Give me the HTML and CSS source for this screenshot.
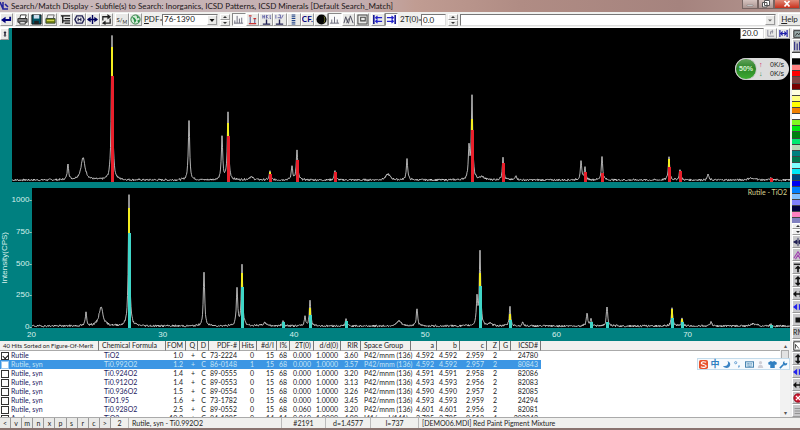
FILE: index.html
```html
<!DOCTYPE html>
<html lang="en">

<head>
    <meta charset="UTF-8">
    <meta name="viewport" content="width=device-width, initial-scale=1.0">
    <title>Search/Match Display</title>
    <link rel="stylesheet" href="styles.css">
</head>

<body>
    <header class="titlebar">
        <svg class="app-icon" viewBox="0 0 9 10"><path d="M0 1l3 7M3 1v7h5M5 3l3 3" stroke="#22229c" stroke-width="1.5" fill="none"/></svg>
        <h1>Search/Match Display - Subfile(s) to Search: Inorganics, ICSD Patterns, ICSD Minerals [Default Search_Match]</h1>
        <div class="window-buttons">
            <button aria-label="Minimize"><svg viewBox="0 0 8 8"><path d="M1 5h6v1H1z" fill="#fff" stroke="#777" stroke-width=".5"/></svg></button>
            <button aria-label="Restore"><svg viewBox="0 0 8 8"><path d="M2.500.5h5v5h-5zM.5 2.500h4.500v4.500H.5z" fill="#fff" stroke="#555"/></svg></button>
            <button class="close" aria-label="Close"><svg viewBox="0 0 8 8"><path d="M1.500 1l5 5.500M6.500 1l-5 5.500" stroke="#fff" stroke-width="1.800"/></svg></button>
        </div>
    </header>

    <div class="toolbar">
        <div class="group one">
            <button aria-label="Return"><svg viewBox="0 0 12 12"><path d="M10 3v3.500H3" stroke="#00007c" stroke-width="2" fill="none"/><path d="M0 6.500L5 3v7z" fill="#00007c"/></svg></button>
        </div>
        <div class="group three">
            <button aria-label="Print"><svg viewBox="0 0 12 12"><path d="M3 5l1-4h6L9 5z" fill="#fff" stroke="#333"/><path d="M1 5h10v4H1z" fill="#888" stroke="#222"/><path d="M3 8h6v3H3z" fill="#ddd" stroke="#333"/></svg></button>
            <button aria-label="Save"><svg viewBox="0 0 12 12"><path d="M1 1h10v10H1z" fill="#056" stroke="#111"/><path d="M3 1h6v4H3z" fill="#cde"/><path d="M3.500 7.500h5V11h-5z" fill="#222"/></svg></button>
            <button aria-label="Open"><svg viewBox="0 0 12 12"><path d="M2 5l1-4h7l-1 4z" fill="#eee" stroke="#666"/><path d="M1 5h10v5H1z" fill="#7a8a10" stroke="#343"/><path d="M2 7h8" stroke="#e5e560"/></svg></button>
        </div>
        <div class="group four">
            <button aria-label="List"><svg viewBox="0 0 12 12"><path d="M1 2h10M3 2v8M5 5h6M3 7.500h8M5 10h6" stroke="#111" stroke-width="1.400" fill="none"/></svg></button>
            <button aria-label="Element filter"><svg viewBox="0 0 12 12"><path d="M3 2h6l2 4-2 4H3L1 6z" fill="none" stroke="#225" stroke-width="1.500"/><path d="M4.500 4v4M7.500 4v4M4 6h4" stroke="#225" stroke-width="1.200"/></svg></button>
            <button aria-label="Align"><svg viewBox="0 0 12 12"><path d="M6 1v10M1 6h10" stroke="#00005c" stroke-width="1.500"/><path d="M0 6l4-3v6zM12 6L8 3v6z" fill="#00005c"/></svg></button>
            <button aria-label="Refresh"><svg viewBox="0 0 12 12"><path d="M2 7V3h6M10 5v5H4" fill="none" stroke="#222" stroke-width="1.400"/><path d="M7 0l4 3-4 3zM5 7l-4 3 4 2z" fill="#222"/></svg></button>
        </div>
        <div class="group two">
            <button class="sm" aria-label="Search match">S/<sub>M</sub></button>
            <button aria-label="Globe"><svg viewBox="0 0 12 12"><circle cx="6" cy="6" r="5" fill="#d5ebd8" stroke="#28783c"/><path d="M2 3l3 1 2 3-2 3-1-4zM7 1l3 3-2 1zM8 7l3-1-2 4z" fill="#269044"/></svg></button>
        </div>
        <label class="pdf-label" for="pdf"><u>P</u>DF=</label>
        <div class="combo pdf">
            <input type="text" id="pdf" value="76-1390">
            <button aria-label="PDF list"><svg viewBox="0 0 8 8"><path d="M1.500 3h5L4 6z" fill="#111"/></svg></button>
        </div>
        <div class="spin"><button aria-label="Next card"></button><button aria-label="Previous card"></button></div>
        <div class="group ten">
            <button class="on" aria-label="Pattern"><svg viewBox="0 0 12 12"><path d="M1 10h10M2 10V7M4.500 10V2M7 10V5M9.500 10V4" stroke="#667" fill="none"/></svg></button>
            <button aria-label="Markers"><svg viewBox="0 0 12 12"><path d="M3.500 11V3M8.500 11V5" stroke="#448"/><path d="M2 2h3M7 5h3M2 10.500h8" stroke="#c33" stroke-width="1.300"/></svg></button>
            <button aria-label="HKL labels"><svg viewBox="0 0 12 12"><path d="M2 1v4M4 1v4M2 3h2M6 1v4M8 1L6 3l2 2M10 1v4h1" stroke="#449" stroke-width=".8" fill="none"/><path d="M6 6v5M2 11h8" stroke="#225" stroke-width="1.500"/></svg></button>
            <button aria-label="Intensity labels"><svg viewBox="0 0 12 12"><path d="M2 1v4M5 1h2v4M10 1L8 5M4 4h3" stroke="#449" stroke-width=".8" fill="none"/><path d="M6 6v5M2 11h8" stroke="#225" stroke-width="1.500"/></svg></button>
            <button aria-label="Stack"><svg viewBox="0 0 12 12"><path d="M4 1h4M4 3h4M4 5h4M4 7h4M4 9h4M4 11h4" stroke="#248" stroke-width="1.100"/></svg></button>
            <button class="cf" aria-label="Chemical formula">CF.</button>
            <button aria-label="Contrast"><svg viewBox="0 0 12 12"><circle cx="6" cy="6" r="5.500" fill="#050505"/><path d="M8 2a5 5 0 010 8c2-3 2-5 0-8z" fill="#d4df45"/></svg></button>
            <button class="on" aria-label="Low peaks"><svg viewBox="0 0 12 12"><path d="M1 10h10M3 10V6M6 10V3M9 10V6" stroke="#667" fill="none"/></svg></button>
            <button aria-label="Overlay"><svg viewBox="0 0 12 12"><path d="M1 10l2-7 2 6 1 1 2-8 3 8M4 10l2-5" stroke="#445" fill="none"/></svg></button>
            <button aria-label="Window"><svg viewBox="0 0 12 12"><path d="M1 1h10v10H1zM4 3.500h5v4H4z" stroke="#444" fill="none" stroke-width="1.100"/></svg></button>
        </div>
        <div class="group two">
            <button aria-label="Shift left"><svg viewBox="0 0 12 12"><path d="M2 1v10" stroke="#00008c" stroke-width="1.600"/><path d="M4 4h7M4 8h7M6 2L4 4l2 2M6 6L4 8l2 2" stroke="#22c" fill="none" stroke-width="1.300"/></svg></button>
            <button class="on" aria-label="Shift right"><svg viewBox="0 0 12 12"><path d="M10 1v10" stroke="#00008c" stroke-width="1.600"/><path d="M1 4h7M1 8h7M6 2l2 2-2 2M6 6l2 2-2 2" stroke="#22c" fill="none" stroke-width="1.300"/></svg></button>
        </div>
        <label class="offset-label" for="offset">2T(0)=</label>
        <input type="text" id="offset" class="offset" value="0.0">
        <div class="spin"><button aria-label="Increase offset"></button><button aria-label="Decrease offset"></button></div>
        <div class="combo long">
            <input type="text" aria-label="Hit description">
            <button aria-label="Hit list"><svg viewBox="0 0 8 8"><path d="M2 3.500h4L4 5.500z" fill="#666"/></svg></button>
        </div>
        <button class="help"><span><u>H</u>elp</span></button>
    </div>

    <div class="workspace">
        <main class="content">
            <section class="plots">
                <div class="plot-row upper">
                    <div class="gutter"><button class="tiny" aria-label="Scale plot"><svg viewBox="0 0 8 8"><path d="M4 0l2 2.500H2zM4 8l2-2.500H2zM3 2h2v4H3z" fill="#223"/></svg></button></div>
                    <svg class="plot" id="plot-top" viewBox="12 28 778 154" preserveAspectRatio="none"></svg>
                </div>
                <div class="plot-row lower">
                    <div class="y-axis">
                        <div class="y-title">Intensity(CPS)</div>
                        <div class="y-labels"><span>1000-</span><span>750-</span><span>500-</span><span>250-</span><span>0-</span></div>
                    </div>
                    <svg class="plot" id="plot-bottom" viewBox="32 188 758 140" preserveAspectRatio="none"></svg>
                    <div class="phase">Rutile - TiO2</div>
                </div>
                <div class="x-axis"><span>20</span><span>30</span><span>40</span><span>50</span><span>60</span><span>70</span></div>

                <div class="range">
                    <input type="text" aria-label="Range" value="20.0">
                    <button aria-label="Axis"><svg viewBox="0 0 10 10"><path d="M2 1v7h7M5 6V3h3M7 1v4" stroke="#889" fill="none"/></svg></button>
                    <button aria-label="Full range"><svg viewBox="0 0 10 10"><path d="M1 1v8M9 1v8M2 5h6" stroke="#22a" stroke-width="1.300"/><path d="M1 5l3-3v6zM9 5L6 2v6z" fill="#22a"/></svg></button>
                </div>
                <div class="speed">
                    <b>50%</b>
                    <div><p><i class="up">&#8593;</i>0K/s</p><p><i class="down">&#8595;</i>0K/s</p></div>
                </div>
            </section>

            <section class="hits">
                <table>
                    <colgroup>
                        <col class="c-name"><col class="c-formula"><col class="c-fom"><col class="c-q"><col class="c-d"><col class="c-pdf"><col class="c-hits"><col class="c-dl"><col class="c-i"><col class="c-2t"><col class="c-dd"><col class="c-rir"><col class="c-sg"><col class="c-a"><col class="c-b"><col class="c-c"><col class="c-z"><col class="c-g"><col class="c-icsd"><col>
                    </colgroup>
                    <thead>
                        <tr><th>40 Hits Sorted on Figure-Of-Merit</th><th>Chemical Formula</th><th>FOM</th><th>Q</th><th>D</th><th>PDF-#</th><th>Hits</th><th>#d/I</th><th>I%</th><th>2T(0)</th><th>d/d(0)</th><th>RIR</th><th>Space Group</th><th>a</th><th>b</th><th>c</th><th>Z</th><th>G</th><th>ICSD#</th><th></th></tr>
                    </thead>
                    <tbody>
                        <tr><td><label><input type="checkbox" checked>Rutile</label></td><td>TiO2</td><td>1.0</td><td>+</td><td>C</td><td>73-2224</td><td>0</td><td>15</td><td>68</td><td>0.000</td><td>1.0000</td><td>3.60</td><td>P42/mnm (136)</td><td>4.592</td><td>4.592</td><td>2.959</td><td>2</td><td></td><td>24780</td></tr>
                        <tr class="selected"><td><label><input type="checkbox">Rutile, syn</label></td><td>Ti0.992O2</td><td>1.2</td><td>+</td><td>C</td><td>86-0148</td><td>1</td><td>15</td><td>68</td><td>0.000</td><td>1.0000</td><td>3.57</td><td>P42/mnm (136)</td><td>4.592</td><td>4.592</td><td>2.957</td><td>2</td><td></td><td>80843</td></tr>
                        <tr><td><label><input type="checkbox">Rutile, syn</label></td><td>Ti0.924O2</td><td>1.4</td><td>+</td><td>C</td><td>89-0555</td><td>0</td><td>15</td><td>68</td><td>0.000</td><td>1.0000</td><td>3.20</td><td>P42/mnm (136)</td><td>4.591</td><td>4.591</td><td>2.958</td><td>2</td><td></td><td>82086</td></tr>
                        <tr><td><label><input type="checkbox">Rutile, syn</label></td><td>Ti0.912O2</td><td>1.4</td><td>+</td><td>C</td><td>89-0553</td><td>0</td><td>15</td><td>68</td><td>0.000</td><td>1.0000</td><td>3.13</td><td>P42/mnm (136)</td><td>4.593</td><td>4.593</td><td>2.956</td><td>2</td><td></td><td>82083</td></tr>
                        <tr><td><label><input type="checkbox">Rutile, syn</label></td><td>Ti0.936O2</td><td>1.5</td><td>+</td><td>C</td><td>89-0554</td><td>0</td><td>15</td><td>68</td><td>0.000</td><td>1.0000</td><td>3.26</td><td>P42/mnm (136)</td><td>4.590</td><td>4.590</td><td>2.957</td><td>2</td><td></td><td>82085</td></tr>
                        <tr><td><label><input type="checkbox">Rutile, syn</label></td><td>TiO1.95</td><td>1.6</td><td>+</td><td>C</td><td>73-1782</td><td>0</td><td>15</td><td>68</td><td>0.000</td><td>1.0000</td><td>3.45</td><td>P42/mnm (136)</td><td>4.593</td><td>4.593</td><td>2.959</td><td>2</td><td></td><td>24294</td></tr>
                        <tr><td><label><input type="checkbox">Rutile, syn</label></td><td>Ti0.928O2</td><td>2.5</td><td>+</td><td>C</td><td>89-0552</td><td>0</td><td>15</td><td>68</td><td>0.060</td><td>1.0000</td><td>3.20</td><td>P42/mnm (136)</td><td>4.601</td><td>4.601</td><td>2.956</td><td>2</td><td></td><td>82081</td></tr>
                        <tr><td><label><input type="checkbox">Anatase, syn</label></td><td>TiO2</td><td>10.2</td><td>+</td><td>C</td><td>84-1285</td><td>0</td><td>14</td><td>14</td><td>0.060</td><td>1.0000</td><td>4.99</td><td>I41/amd (141)</td><td>3.785</td><td>3.785</td><td>9.513</td><td>4</td><td></td><td>202242</td></tr>
                    </tbody>
                </table>
                <div class="scrollbar"><span>&#9652;</span><i></i><span>&#9662;</span></div>

                <div class="ime">
                    <svg viewBox="0 0 10 10"><rect width="10" height="10" rx="2" fill="#e8502a"/><path d="M8 2.500C5 1.500 2.500 2 2.500 3.500S8 5 8 6.700 4.500 8.500 2 7.500" fill="none" stroke="#fff" stroke-width="1.300"/></svg>
                    <span>中</span>
                    <svg viewBox="0 0 10 10"><path d="M6 1c2 3 0 6-5 6 4 4 9 1 8-3-.3-1.500-1.500-2.500-3-3z" fill="#3a84c4"/></svg>
                    <svg viewBox="0 0 10 10"><circle cx="3" cy="3" r="1.200" fill="none" stroke="#3a84c4" stroke-width=".8"/><path d="M6 6h1.500c0 1.500-.5 2-1.500 2.500z" fill="#3a84c4"/></svg>
                    <svg viewBox="0 0 10 10"><rect x=".5" y="2" width="9" height="6" fill="#d9ebf6" stroke="#3a7aa8"/><path d="M2 4h6M2 5.500h6M3 7h4" stroke="#3a7aa8" stroke-width=".8" stroke-dasharray="1 .5"/></svg>
                    <svg viewBox="0 0 10 10"><circle cx="5" cy="3" r="1.800" fill="#cfcfd6"/><path d="M2 9c0-5 6-5 6 0z" fill="#cfcfd6"/></svg>
                    <svg viewBox="0 0 10 10"><path d="M3 1l2 1 2-1 3 2-1 2.500-1.500-.5v4h-5V5L1 5.500 0 3z" fill="#2f7fc0"/></svg>
                    <svg viewBox="0 0 10 10"><path d="M1 9l4-4" stroke="#2f7fc0" stroke-width="1.800"/><path d="M9 3L7.500 4 6 3V1C3.500 2 4 6 6.500 6S9.500 4.500 9 3z" fill="#2f7fc0"/></svg>
                </div>
            </section>
        </main>

        <aside class="side">
            <button class="short" aria-label="Image"><svg viewBox="0 0 12 12"><path d="M1 2h10v8H1z" fill="#9aa" stroke="#222"/><path d="M3 8l2-3 2 2 2-3" stroke="#222" fill="none"/></svg></button>
            <button aria-label="Bars"><svg viewBox="0 0 12 12"><path d="M2 1v10M5 3v8M8 1v10" stroke="#22227c" stroke-width="1.300"/></svg></button>
            <div class="palette" id="palette"></div>
            <div class="spin"><button aria-label="Scroll up"></button><button aria-label="Scroll down"></button></div>
            <button aria-label="Center"><svg viewBox="0 0 12 12"><path d="M6 1v10M1 6h10" stroke="#225"/><path d="M0 6l5-3v6zM12 6L7 3v6z" fill="#225"/></svg></button>
            <button aria-label="Peak"><svg viewBox="0 0 12 12"><path d="M1 10l5-8 5 8M3 11l3-5 3 5" stroke="#a040b0" stroke-width="1.300" fill="none"/></svg></button>
            <button aria-label="Top"><svg viewBox="0 0 12 12"><path d="M1 1.500h10" stroke="#111" stroke-width="1.500"/><path d="M6 3l4 4H7v4H5V7H2z" fill="#111"/></svg></button>
            <button aria-label="Vertical"><svg viewBox="0 0 12 12"><path d="M6 0l4 4H7v4h3l-4 4-4-4h3V4H2z" fill="#111"/></svg></button>
            <button aria-label="Horizontal"><svg viewBox="0 0 12 12"><path d="M0 6l4-4v3h4V2l4 4-4 4V7H4v3z" fill="#111"/></svg></button>
            <button aria-label="Spread"><svg viewBox="0 0 12 12"><path d="M0 6l5-4v8zM12 6L7 2v8z" fill="#22e"/></svg></button>
            <button aria-label="Stop"><svg viewBox="0 0 12 12"><path d="M3 3h7v6H3z" fill="#111"/></svg></button>
            <button class="rm">RM</button>
            <button aria-label="Zoom window"><svg viewBox="0 0 12 12"><path d="M1 1h10v10H1z" fill="#fff" stroke="#222"/><path d="M3 9V4l4 5" stroke="#333" fill="none"/></svg></button>
            <button aria-label="Stretch"><svg viewBox="0 0 12 12"><path d="M6 0l4 4H7v4h3l-4 4-4-4h3V4H2z" fill="#111"/></svg></button>
            <button aria-label="Pan"><svg viewBox="0 0 12 12"><path d="M0 6l5-4v8zM12 6L7 2v8z" fill="#22e"/></svg></button>
            <button aria-label="Widen"><svg viewBox="0 0 12 12"><path d="M0 6l4-4v3h4V2l4 4-4 4V7H4v3z" fill="#111"/></svg></button>
            <button aria-label="Remove"><svg viewBox="0 0 12 12"><circle cx="6" cy="6" r="5" fill="#d01c34" stroke="#801"/><path d="M3.500 3.500l5 5M8.500 3.500l-5 5" stroke="#fff" stroke-width="1.500"/></svg></button>
            <button aria-label="Report"><svg viewBox="0 0 12 12"><path d="M2 3h9M2 6h9M2 9h9" stroke="#888"/></svg></button>
        </aside>
    </div>

    <footer class="statusbar">
        <nav><button>&lt;</button><button>v</button><button>m</button><button>n</button><button>x</button><button>p</button><button>s</button><button>r</button><button>c</button><button>&gt;</button></nav>
        <span class="s-count">2</span>
        <span class="s-name">Rutile, syn - Ti0.992O2</span>
        <span class="s-num">#2191</span>
        <span class="s-d">d=1.4577</span>
        <span class="s-i">I=737</span>
        <span class="s-file">[DEMO06.MDI] Red Paint Pigment Mixture</span>
    </footer>

    <script src="plot.js"></script>
</body>

</html>
```

FILE: plot.js
```js
// peak: [x, top, half width, marker top, yellow top]
const upper = {
    base: 180, left: 12, right: 790, bottom: 182, color: '#e8202c', seed: 7,
    peaks: [
        [68, 164, 1], [83, 158, 3], [112, 35, 1, 76, 47], [189, 121, 1], [222, 138, 1], [228, 112, 1, 136, 123],
        [251, 177, 3], [270, 171, 1, 174, 172], [292, 166, 1], [297, 150, 1, 160], [335, 170, 1, 172], [388, 174, 3],
        [407, 159, 1], [469, 148, 1], [472, 98, 1, 130, 119], [482, 177, 3], [503, 157, 1, 163], [516, 175, 1],
        [581, 162, 1], [585, 168, 1, 172], [602, 157, 1, 173], [669, 157, 1, 167, 159], [680, 169, 1, 171],
        [708, 174, 1], [750, 178, 3], [756, 178, 1], [771, 178, 1, 178]
    ]
};

const lower = {
    base: 326, left: 32, right: 790, bottom: 328, color: '#40d6c8', seed: 19,
    peaks: [
        [86, 313, 1], [101, 307, 3], [129, 195, 1, 233, 208], [204, 273, 1], [237, 289, 1], [242, 265, 1, 287, 273],
        [265, 323, 3], [283, 320, 1, 322], [305, 317, 1], [310, 300, 1, 315, 308], [346, 319, 1, 321], [399, 321, 3],
        [417, 308, 1], [477, 300, 1], [480, 252, 1, 286, 273], [490, 324, 3], [510, 307, 1, 320, 314], [523, 322, 1],
        [587, 313, 1], [591, 318, 1, 322], [607, 307, 1, 322], [672, 308, 1, 318, 309], [682, 318, 1, 322, 319],
        [711, 321, 1], [753, 324, 3], [757, 324, 1], [771, 324, 1, 325]
    ]
};

function drawPlot(id, plot) {
    let seed = plot.seed;
    let points = '';
    for (let x = plot.left; x <= plot.right; x += 0.5) {
        seed = (seed * 9301 + 49297) % 233280;
        let y = plot.base - (seed / 233280 - 0.5) * 2;
        for (const [px, top, width] of plot.peaks) {
            const d = (x - px) / width;
            y -= (plot.base - top) / (1 + d * d * 1.5);
        }
        points += `${x},${y.toFixed(1)} `;
    }

    let bars = '';
    for (const [px, , , top, yellow] of plot.peaks) {
        if (yellow) {
            bars += `<path d="M${px} ${yellow}V${top}" stroke="#f4ee20" stroke-width="2"/>`;
        }
        if (top) {
            bars += `<path d="M${px + 0.5} ${top}V${plot.bottom}" stroke="${plot.color}" stroke-width="3"/>`;
        }
    }
    document.getElementById(id).innerHTML =
        `<polyline points="${points}" fill="none" stroke="#e2e2e2" stroke-width=".8"/>${bars}`;
}

drawPlot('plot-top', upper);
drawPlot('plot-bottom', lower);

const colors = ['#fff', '#000', '#ff8080', '#f00', '#804040', '#700', '#ffffe0', '#ffff80', '#ff0', '#f08000',
    '#fff', '#80f820', '#00e810', '#008010', '#00e870', '#b8d8b8', '#008080', '#007850', '#80ffff', '#00e8f8',
    '#004880', '#0000f0', '#0080ff', '#80c0ff', '#8080ff', '#000040', '#ff80c0', '#8080c0'];
document.getElementById('palette').innerHTML =
    colors.map(c => `<i style="background:${c}"></i>`).join('');
```

FILE: styles.css
```css
* {
    box-sizing: border-box;
}

body {
    margin: 0;
    height: 100vh;
    display: flex;
    flex-direction: column;
    overflow: hidden;
    font-family: Lato, "Liberation Sans", Arial, sans-serif;
    font-size: 7px;
    line-height: 9px;
    color: #222;
    background: #8a7470;
    border-bottom: 2px solid #8a7470;
}

button,
input {
    font: inherit;
    color: inherit;
    margin: 0;
    padding: 0;
    min-width: 0;
}

button {
    display: flex;
    align-items: center;
    justify-content: center;
    background: #e9e9e7;
    border: 1px solid;
    border-color: #fff #999 #999 #fff;
    overflow: hidden;
}

input[type="text"] {
    background: #fff;
    border: 1px solid;
    border-color: #777 #ddd #ddd #777;
    padding-left: 1px;
    color: #222;
}

/* title bar */
.titlebar {
    display: flex;
    align-items: center;
    height: 12px;
    flex: none;
    background: linear-gradient(90deg, #c9b9bc, #c4aeb0 45%, #c09c92 52%, #b08c84 65%, #a5837e 85%, #b49690);
}

.app-icon {
    width: 9px;
    height: 10px;
    margin-right: 2px;
}

h1 {
    flex: 1;
    margin: 0;
    font: 8px/12px Lato, "Open Sans", sans-serif;
    color: #1c1718;
    white-space: nowrap;
}

.window-buttons {
    display: flex;
    align-self: flex-start;
    height: 9px;
}

.window-buttons button {
    width: 16px;
    background: linear-gradient(#d6c4c0, #aa9490);
    border-color: #776562;
    border-top: 0;
}

.window-buttons .close {
    width: 26px;
    background: linear-gradient(#e08a78, #c8301c);
}

.window-buttons svg {
    width: 8px;
    height: 8px;
}

/* toolbar */
.toolbar {
    display: flex;
    align-items: center;
    gap: 2px;
    height: 16px;
    flex: none;
    padding: 1px 0;
    background: #f0f0ee;
    border-bottom: 1px solid #fff;
    font-size: 8px;
}

.group {
    display: flex;
    flex: none;
    height: 13px;
}

.group button {
    flex: 1;
}

.group svg {
    width: 11px;
    height: 11px;
}

.group.one { width: 13px; }
.group.two { width: 27px; }
.group.three { width: 42px; }
.group.four { width: 54px; }
.group.ten { width: 137px; }

.group .on {
    background: #fafafa;
    border-color: #888 #fff #fff #888;
}

.group .cf {
    font-weight: bold;
    color: #00007c;
}

.group .sm {
    font-size: 6px;
}

sub {
    font-size: 5px;
    line-height: 5px;
    align-self: flex-end;
}

.pdf-label {
    width: 16px;
}

.offset-label {
    width: 19px;
}

.combo {
    display: flex;
    height: 12px;
    background: #fff;
    border: 1px solid;
    border-color: #777 #ddd #ddd #777;
}

.combo input[type="text"] {
    flex: 1;
    border: 0;
}

.combo button {
    width: 10px;
}

.combo svg {
    width: 8px;
    height: 8px;
}

.combo.pdf {
    width: 56px;
}

.combo.long {
    flex: 1;
}

.offset {
    width: 25px;
    height: 12px;
}

.spin {
    display: flex;
    flex-direction: column;
    width: 10px;
    height: 12px;
    flex: none;
}

.spin button {
    flex: 1;
    width: 100%;
}

.spin button::before {
    content: "";
    border: 2px solid transparent;
    border-top: 0;
    border-bottom-color: #333;
}

.spin button:last-child::before {
    transform: rotate(180deg);
}

.help {
    width: 22px;
    height: 13px;
    border-right: 0;
}

/* main area */
.workspace {
    display: flex;
    flex: 1;
    min-height: 0;
}

.content {
    display: flex;
    flex-direction: column;
    flex: 1;
    min-width: 0;
}

.plots {
    position: relative;
    display: flex;
    flex-direction: column;
    flex: 1;
    min-height: 0;
    background: #008080;
    color: #fff;
}

.plot-row {
    display: flex;
    position: relative;
    min-height: 0;
}

.upper {
    flex: 154;
    margin-bottom: 6px;
}

.lower {
    flex: 140;
}

.plot {
    display: block;
    flex: 1;
    min-width: 0;
    height: 100%;
    background: #000;
}

.gutter {
    width: 12px;
}

.tiny {
    width: 9px;
    height: 12px;
}

.tiny svg {
    width: 6px;
    height: 8px;
}

.y-axis {
    display: flex;
    justify-content: space-between;
    align-items: center;
    width: 32px;
    font: 8px/9px "Liberation Sans", Arial, sans-serif;
    color: #d8f0ec;
}

.y-title {
    writing-mode: vertical-rl;
    transform: rotate(180deg);
}

.y-labels {
    display: flex;
    flex-direction: column;
    justify-content: space-between;
    align-self: stretch;
    text-align: right;
    margin: 7px 0 -3px;
}

.x-axis {
    display: flex;
    height: 13px;
    margin-left: 27px;
    border-top: 2px solid #008080;
    font: 8px/9px "Liberation Sans", Arial, sans-serif;
    color: #d8f0ec;
}

.x-axis span {
    flex: 0 0 17.2%;
}

.x-axis span:last-child {
    flex: none;
}

.phase {
    position: absolute;
    top: 0;
    right: 3px;
    color: #d8d490;
}

.range {
    position: absolute;
    top: 0;
    right: 0;
    display: flex;
    height: 11px;
    background: #f0f0ee;
    font-size: 8px;
}

.range input {
    width: 24px;
}

.range button {
    width: 13px;
}

.range svg {
    width: 9px;
    height: 9px;
}

.speed {
    position: absolute;
    top: 30px;
    right: 1px;
    display: flex;
    align-items: center;
    gap: 2px;
    width: 54px;
    height: 22px;
    border-radius: 11px;
    background: #dcdcdc;
    color: #222;
    font: 7px/9px "Liberation Sans", Arial, sans-serif;
}

.speed b {
    width: 22px;
    height: 22px;
    border: 1px solid #ccc;
    border-radius: 50%;
    background: linear-gradient(#64a45c, #2c8428 45%, #3cac30);
    color: #d8f4d4;
    line-height: 20px;
    text-align: center;
}

.speed div {
    flex: 1;
}

.speed p {
    display: flex;
    justify-content: space-between;
    margin: 0 5px 0 0;
}

.speed i {
    font-style: normal;
    font-weight: bold;
}

.up { color: #d02060; }
.down { color: #2c8a4c; }

/* hit list */
.hits {
    position: relative;
    display: flex;
    height: 76px;
    flex: none;
    overflow: hidden;
    background: #fff;
}

table {
    flex: 1;
    width: 100%;
    height: 0;
    table-layout: fixed;
    border-collapse: separate;
    border-spacing: 0;
}

.c-name { width: 99px; }
.c-formula { width: 67px; }
.c-fom { width: 20px; }
.c-q { width: 12px; }
.c-d { width: 11px; }
.c-pdf { width: 31px; }
.c-hits { width: 17px; }
.c-dl { width: 20px; }
.c-i { width: 13px; }
.c-2t { width: 24px; }
.c-dd { width: 27px; }
.c-rir { width: 20px; }
.c-sg { width: 50px; }
.c-a { width: 26px; }
.c-b { width: 23px; }
.c-c { width: 27px; }
.c-z { width: 13px; }
.c-g { width: 11px; }
.c-icsd { width: 30px; }

th,
td {
    height: 9px;
    padding: 0 3px 0 0;
    text-align: right;
    white-space: nowrap;
    line-height: 9px;
}

th {
    height: 10px;
    padding-right: 2px;
    font-weight: normal;
    background: #f1f1ef;
    border-right: 1px solid #777;
    border-bottom: 1px solid #aaa;
}

th:last-child {
    border-right: 0;
}

th:first-child,
th:nth-child(2),
th:nth-child(13) {
    text-align: left;
    padding: 0 0 0 3px;
}

th:first-child {
    font-size: 6px;
}

td:first-child,
td:nth-child(2) {
    text-align: left;
    color: #202060;
}

td:nth-child(2) {
    padding-left: 5px;
}

td:nth-child(13) {
    text-align: left;
    padding: 0 0 0 3px;
}

td label {
    display: flex;
    align-items: center;
    gap: 2px;
}

input[type="checkbox"] {
    appearance: none;
    display: flex;
    width: 8px;
    height: 8px;
    margin-left: 1px;
    border: 1px solid #333;
    background: #fff;
}

input[type="checkbox"]:checked::before {
    content: "";
    width: 5px;
    height: 3px;
    margin: 1px 0 0 1px;
    border: solid #111;
    border-width: 0 0 1px 1px;
    transform: rotate(-45deg);
}

.selected td,
.selected td:first-child,
.selected td:nth-child(2) {
    background: #3c96e4;
    color: #c4e4f4;
}

.selected input[type="checkbox"] {
    border-color: #9cc8f0;
}

.scrollbar {
    display: flex;
    flex-direction: column;
    align-items: center;
    width: 10px;
    background: #f2f2f2;
    font-size: 6px;
    color: #555;
}

.scrollbar i {
    width: 8px;
    height: 9px;
    margin-bottom: auto;
    background: #e2e2e2;
    border: 1px solid #aaa;
}

.ime {
    position: absolute;
    top: 17px;
    right: 0;
    display: flex;
    align-items: center;
    justify-content: space-between;
    width: 93px;
    height: 12px;
    padding: 0 1px;
    background: #f6fafd;
    border: 1px solid #c4dcec;
}

.ime svg {
    width: 9px;
    height: 9px;
}

.ime span {
    font: bold 9px/10px "Noto Sans CJK SC", sans-serif;
    color: #2f7fc0;
}

/* right tool strip */
.side {
    width: 10px;
    overflow: hidden;
    background: #d8d8da;
    border-left: 2px solid #eee;
}

.side button {
    width: 12px;
    height: 13px;
    background: #c8c8ca;
}

.side .short {
    height: 11px;
}

.side svg {
    width: 10px;
    height: 10px;
    flex: none;
}

.side .rm {
    justify-content: flex-start;
}

.side .spin {
    width: 12px;
}

.side .spin button {
    height: 6px;
    background: #f0f0f0;
}

.palette {
    display: flex;
    flex-direction: column;
    height: 171px;
}

.palette i {
    flex: 1;
    border-top: 1px solid #444;
}

/* status bar */
.statusbar {
    display: flex;
    flex: none;
    height: 11px;
    background: #f0f0ee;
    border-top: 1px solid #aaa;
    line-height: 10px;
    white-space: nowrap;
}

.statusbar nav {
    display: flex;
    width: 111px;
}

.statusbar nav button {
    flex: 1;
    border-width: 0 1px 0 0;
}

.statusbar span {
    border-right: 1px solid #bbb;
    text-align: center;
}

.s-count { width: 18px; }
.s-num { width: 44px; }
.s-d { width: 45px; }
.s-i { width: 48px; }

.statusbar .s-name {
    width: 153px;
    padding-left: 3px;
    text-align: left;
}

.statusbar .s-file {
    flex: 1;
    padding-left: 3px;
    border: 0;
    text-align: left;
}
```
